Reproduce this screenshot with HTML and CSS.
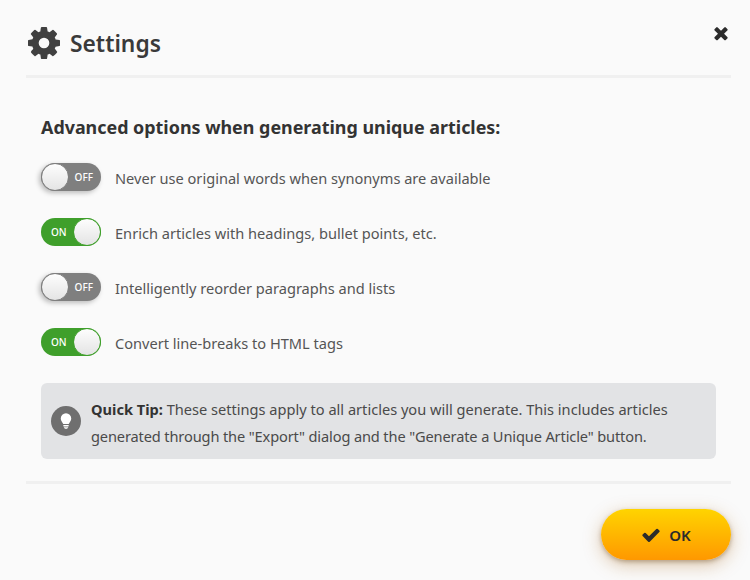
FILE: index.html
```html
<!DOCTYPE html>
<html lang="en">
<head>
<meta charset="utf-8">
<title>Settings</title>
<link rel="stylesheet" href="styles.css">
</head>
<body>
<div class="dialog">
  <header class="dialog-header">
    <svg class="gear" viewBox="128 128 1536 1536"><path d="M1152 896q0-106-75-181t-181-75-181 75-75 181 75 181 181 75 181-75 75-181zm512-109v222q0 12-8 23t-20 13l-185 28q-19 54-39 91 35 50 107 138 10 12 10 25t-9 23q-27 37-99 108t-94 71q-12 0-26-9l-138-108q-44 23-91 38-16 136-29 186-7 28-36 28h-222q-14 0-24.500-8.500t-11.500-21.500l-28-184q-49-16-90-37l-141 107q-10 9-25 9-14 0-25-11-126-114-165-168-7-10-7-23 0-12 8-23 15-21 51-66.500t54-70.500q-27-50-41-99l-183-27q-13-2-21-12.500t-8-23.500v-222q0-12 8-23t19-13l186-28q14-46 39-92-40-57-107-138-10-12-10-24 0-10 9-23 26-36 98.500-107.500t94.500-71.500q13 0 26 10l138 107q44-23 91-38 16-136 29-186 7-28 36-28h222q14 0 24.500 8.500t11.500 21.500l28 184q49 16 90 37l142-107q9-9 24-9 13 0 25 10 129 119 165 170 7 8 7 22 0 12-8 23-15 21-51 66.500t-54 70.500q26 50 41 98l183 28q13 2 21 12.500t8 23.500z"/></svg>
    <h1 class="title">Settings</h1>
    <svg class="close" viewBox="0 0 1792 1792"><path d="M1490 1322q0 40-28 68l-136 136q-28 28-68 28t-68-28l-294-294-294 294q-28 28-68 28t-68-28l-136-136q-28-28-28-68t28-68l294-294-294-294q-28-28-28-68t28-68l136-136q28-28 68-28t68 28l294 294 294-294q28-28 68-28t68 28l136 136q28 28 28 68t-28 68l-294 294 294 294q28 28 28 68z"/></svg>
  </header>
  <main class="dialog-body">
    <h2 class="subtitle">Advanced options when generating unique articles:</h2>
    <ul class="options">
      <li class="option"><span class="toggle off"><span class="knob"></span><span class="toggle-label">OFF</span></span><span class="option-text">Never use original words when synonyms are available</span></li>
      <li class="option"><span class="toggle on"><span class="toggle-label">ON</span><span class="knob"></span></span><span class="option-text">Enrich articles with headings, bullet points, etc.</span></li>
      <li class="option"><span class="toggle off"><span class="knob"></span><span class="toggle-label">OFF</span></span><span class="option-text">Intelligently reorder paragraphs and lists</span></li>
      <li class="option"><span class="toggle on"><span class="toggle-label">ON</span><span class="knob"></span></span><span class="option-text">Convert line-breaks to HTML tags</span></li>
    </ul>
    <div class="tip">
      <span class="tip-icon"><svg viewBox="0 0 16 20"><path d="M8 1a6 6 0 0 0-6 6c0 2.600 1.800 3.900 2.500 5.800.2.500.5.700 1 .700h5c.5 0 .8-.2 1-.7C12.200 10.900 14 9.600 14 7a6 6 0 0 0-6-6z"/><rect x="4.800" y="14.500" width="6.400" height="1.700" rx=".8"/><path d="M5.500 17h5c0 1-1 1.800-2.500 1.800S5.500 18 5.500 17z"/></svg></span>
      <p class="tip-text"><strong>Quick Tip:</strong> These settings apply to all articles you will generate. This includes articles <span class="tip-second">generated through the "Export" dialog and the "Generate a Unique Article" button.</span></p>
    </div>
  </main>
  <footer class="dialog-footer">
    <button class="ok" type="button"><svg class="check" viewBox="0 0 1792 1792"><path d="M1671 566q0 40-28 68l-724 724-136 136q-28 28-68 28t-68-28l-136-136-362-362q-28-28-28-68t28-68l136-136q28-28 68-28t68 28l294 295 656-657q28-28 68-28t68 28l136 136q28 28 28 68z"/></svg>OK</button>
  </footer>
</div>
</body>
</html>
```
FILE: styles.css
```css
* { box-sizing: border-box; }
html, body { margin: 0; height: 100%; }
body {
  background: #fafafa;
  color: #4a4a4a;
  font-family: "Noto Sans", sans-serif;
  font-size: 14.6px;
  overflow: hidden;
}
.dialog { width: 750px; height: 580px; padding: 0 19px 0 26px; }
.dialog-header {
  height: 78px;
  border-bottom: 3px solid #f0f0f0;
  display: flex;
  align-items: flex-start;
  padding: 27px 0 0 2px;
}
.gear { width: 32px; height: 32px; fill: #404040; margin-right: 10px; flex: none; }
.title {
  margin: 1px 0 0;
  font-size: 22.800px;
  line-height: 32px;
  font-weight: 600;
  color: #3a3a3a;
  flex: 1;
}
.close { width: 20px; height: 20px; fill: #2b2b2b; margin-top: -4px; flex: none; }
.dialog-body { padding: 36px 15px 22px 15px; border-bottom: 3px solid #f0f0f0; }
.subtitle { margin: 0 0 23px; font-size: 17.900px; line-height: 26px; font-weight: 700; color: #333; }
.options { list-style: none; margin: 0; padding: 0; display: flex; flex-direction: column; gap: 27px; }
.option { display: flex; align-items: center; gap: 14px; height: 28px; color: #555; }
.option-text { padding-top: 2px; }
.toggle {
  width: 60px; height: 28px; border-radius: 14px;
  display: flex; align-items: center; justify-content: space-between;
  flex: none; color: #fff; font-size: 10px; font-weight: 500;
}
.toggle.off { background: #7f7f7f; box-shadow: -2px 2px 5px rgba(0,0,0,.25); padding-right: 8px; }
.toggle.on { background: #3f9f2b; padding-left: 10px; }
.knob {
  width: 28px; height: 28px; border-radius: 50%;
  background: linear-gradient(#fdfdfd, #e4e4e4);
  border: 1px solid #7f7f7f;
}
.toggle.on .knob { border-color: #3f9f2b; }
.tip {
  margin-top: 27px; height: 76px; background: #e2e3e5; border-radius: 6px;
  display: flex; align-items: center; padding: 3px 20px 0 10px; gap: 10px;
}
.tip-icon {
  width: 30px; height: 30px; border-radius: 50%; background: #6f6f6f; flex: none;
  display: flex; align-items: center; justify-content: center;
  margin-top: -3px;
}
.tip-icon svg { width: 14px; height: 18px; fill: #fff; }
.tip-text { margin: 0; line-height: 27px; color: #4a4a4a; }
.tip-text strong { color: #333; }
.tip-second { letter-spacing: -.13px; }
.dialog-footer { display: flex; justify-content: flex-end; padding-top: 25px; }
.ok {
  width: 130px; height: 51px; border: 0; border-radius: 26px;
  background: linear-gradient(#ffd400, #ff9800);
  box-shadow: 0 2px 4px rgba(90,60,20,.35), 0 5px 18px rgba(170,100,20,.35);
  font: 600 15px "Noto Sans", sans-serif; color: #2b2b2b;
  display: flex; align-items: center; justify-content: center; gap: 8px;
}
.check { width: 20px; height: 20px; fill: #2b2b2b; }
```
